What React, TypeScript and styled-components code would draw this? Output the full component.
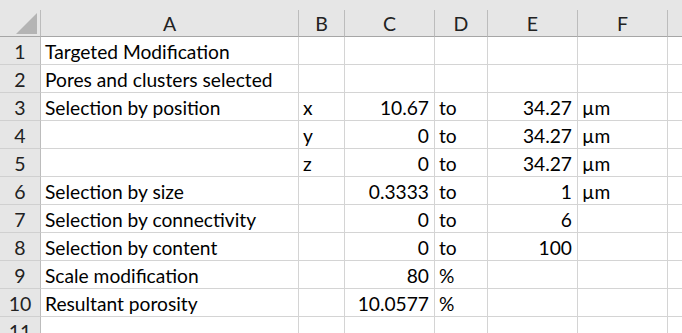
import React from "react";
import styled, { createGlobalStyle } from "styled-components";

const Global = createGlobalStyle`
  html, body { margin: 0; padding: 0; background: #ffffff; overflow: hidden; }
  body { font-family: Lato, "Open Sans", sans-serif; }
`;

const COLS = [41, 258, 46, 90, 53, 90, 90, 60];
const LETTERS = ["A", "B", "C", "D", "E", "F", ""];

const Sheet = styled.div`
  width: 682px;
  height: 333px;
  overflow: hidden;
  background: #e6e6e6;
  padding-top: 10px;
  box-sizing: border-box;
`;

const Grid = styled.div`
  display: grid;
  grid-template-columns: ${COLS.map((c) => c + "px").join(" ")};
  grid-template-rows: 27px repeat(11, 28px);
  background: #ffffff;
`;

const Corner = styled.div`
  background: #e6e6e6;
  border-right: 1px solid #bcbcbc;
  border-bottom: 1px solid #a6a6a6;
  box-sizing: border-box;
  display: flex;
  align-items: flex-end;
  justify-content: flex-end;
  padding: 0 3px 2px 0;
`;

const ColHead = styled.div`
  background: #e6e6e6;
  border-right: 1px solid #bcbcbc;
  border-bottom: 1px solid #a6a6a6;
  box-sizing: border-box;
  display: flex;
  align-items: center;
  justify-content: center;
  font-size: 19.5px;
  color: #222222;
  padding-top: 1px;
`;

const RowHead = styled.div`
  background: #e6e6e6;
  border-right: 1px solid #bcbcbc;
  border-bottom: 1px solid #d0d0d0;
  box-sizing: border-box;
  display: flex;
  align-items: center;
  justify-content: center;
  font-size: 19.5px;
  color: #222222;
  padding-top: 1px;
`;

const Cell = styled.div<{ $num?: boolean }>`
  border-right: 1px solid #d4d4d4;
  border-bottom: 1px solid #d4d4d4;
  box-sizing: border-box;
  display: flex;
  align-items: center;
  justify-content: ${(p) => (p.$num ? "flex-end" : "flex-start")};
  padding: ${(p) => (p.$num ? "1px 5px 0 0" : "1px 0 0 4px")};
  font-size: 19.2px;
  color: #000000;
  white-space: nowrap;
  overflow: visible;
`;

type Val = string | { n: string };
const ROWS: Val[][] = [
  ["Targeted Modification", "", "", "", "", "", ""],
  ["Pores and clusters selected", "", "", "", "", "", ""],
  ["Selection by position", "x", { n: "10.67" }, "to", { n: "34.27" }, "µm", ""],
  ["", "y", { n: "0" }, "to", { n: "34.27" }, "µm", ""],
  ["", "z", { n: "0" }, "to", { n: "34.27" }, "µm", ""],
  ["Selection by size", "", { n: "0.3333" }, "to", { n: "1" }, "µm", ""],
  ["Selection by connectivity", "", { n: "0" }, "to", { n: "6" }, "", ""],
  ["Selection by content", "", { n: "0" }, "to", { n: "100" }, "", ""],
  ["Scale modification", "", { n: "80" }, "%", "", "", ""],
  ["Resultant porosity", "", { n: "10.0577" }, "%", "", "", ""],
  ["", "", "", "", "", "", ""],
];

export default function App() {
  return (
    <>
      <Global />
      <Sheet>
        <Grid>
          <Corner>
            <svg width="21" height="21" viewBox="0 0 21 21">
              <polygon points="0,21 21,21 21,0" fill="#b4b4b4" />
            </svg>
          </Corner>
          {LETTERS.map((l, i) => (
            <ColHead key={"h" + i}>{l}</ColHead>
          ))}
          {ROWS.map((row, r) => (
            <React.Fragment key={r}>
              <RowHead>{r + 1}</RowHead>
              {row.map((v, c) =>
                typeof v === "string" ? (
                  <Cell key={c}>{v}</Cell>
                ) : (
                  <Cell key={c} $num>
                    {v.n}
                  </Cell>
                )
              )}
            </React.Fragment>
          ))}
        </Grid>
      </Sheet>
    </>
  );
}
